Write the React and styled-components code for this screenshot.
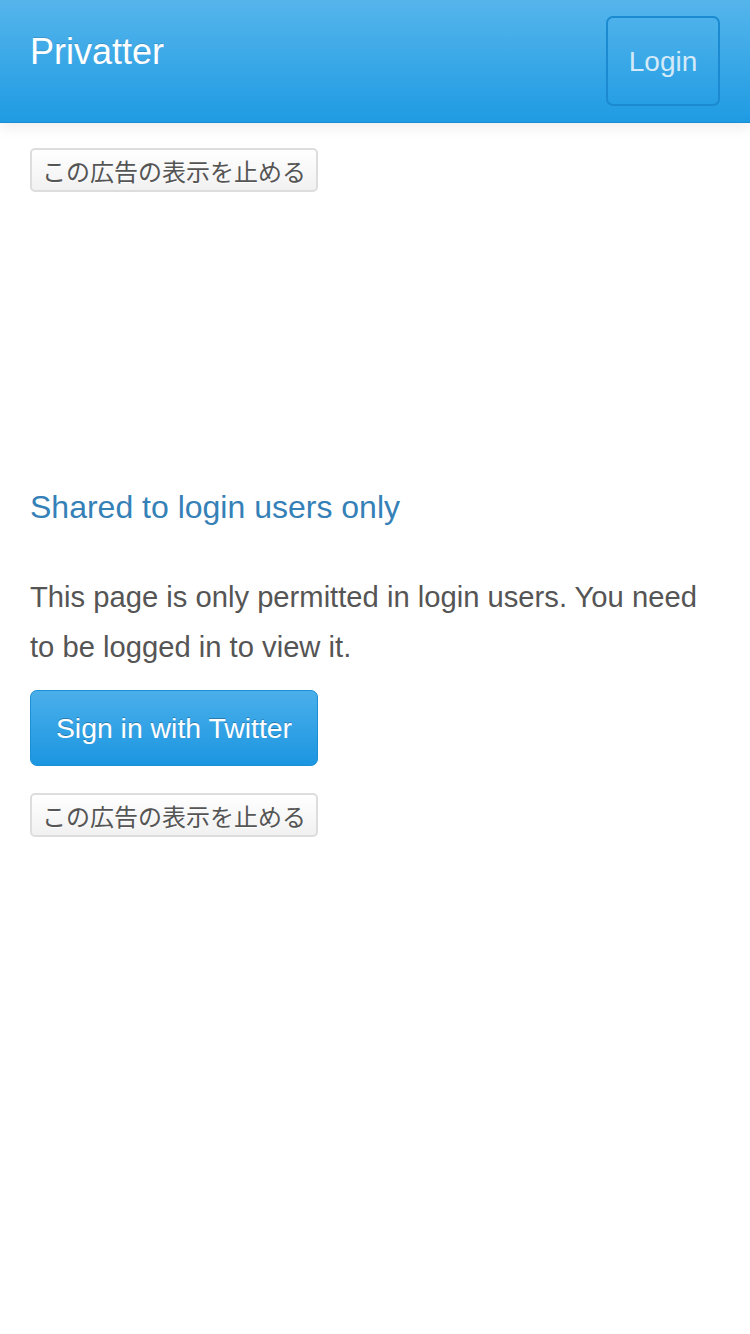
import React from "react"
import styled, { createGlobalStyle } from "styled-components"

const GlobalStyle = createGlobalStyle`
  html, body {
    margin: 0;
    padding: 0;
    background: #fff;
  }
  body {
    font-family: "Liberation Sans", Arial, "Noto Sans CJK JP", sans-serif;
    color: #555;
  }
`

const App = () => (
  <>
    <GlobalStyle />
    <Navbar>
      <Brand>Privatter</Brand>
      <LoginButton>Login</LoginButton>
    </Navbar>
    <Main>
      <AdBlock>
        <HideAdButton>この広告の表示を止める</HideAdButton>
        <AdSpace />
      </AdBlock>
      <Heading>Shared to login users only</Heading>
      <Message>
        This page is only permitted in login users. You need to be logged in
        to view it.
      </Message>
      <TwitterButton>Sign in with Twitter</TwitterButton>
      <AdBlock>
        <HideAdButton>この広告の表示を止める</HideAdButton>
      </AdBlock>
    </Main>
  </>
)

const Navbar = styled.header`
  display: flex;
  align-items: flex-start;
  justify-content: space-between;
  height: 122px;
  padding: 0 30px;
  background: linear-gradient(to bottom, #55b5eb 0%, #1f9be3 100%);
  border-bottom: 1px solid #1a8dd4;
  box-shadow: 0 4px 14px rgba(0, 0, 0, 0.08);
  position: relative;
`

const Brand = styled.div`
  font-size: 36px;
  line-height: 40px;
  color: #fff;
  margin-top: 32px;
  text-shadow: 0 -1px 0 rgba(0, 0, 0, 0.15);
`

const LoginButton = styled.button`
  margin-top: 16px;
  width: 114px;
  height: 90px;
  padding: 2px 0 0;
  box-sizing: border-box;
  background: transparent;
  border: 2px solid #1b8ad0;
  border-radius: 7px;
  font-family: inherit;
  font-size: 28px;
  color: #d4eaf8;
`

const Main = styled.main`
  padding: 25px 30px 0;
`

const AdBlock = styled.div`
  display: flex;
  flex-direction: column;
  align-items: flex-start;
`

const HideAdButton = styled.button`
  width: 288px;
  height: 44px;
  box-sizing: border-box;
  padding: 0;
  border: 2px solid #ddd;
  border-radius: 5px;
  background: linear-gradient(to bottom, #ffffff 0%, #f1f1f1 100%);
  font-family: "Liberation Sans", "Noto Sans CJK JP", sans-serif;
  font-size: 24px;
  font-weight: normal;
  color: #555;
  text-shadow: 0 1px 0 #fff;
`

const AdSpace = styled.div`
  height: 295px;
`

const Heading = styled.h2`
  margin: 0;
  font-size: 32px;
  line-height: 40px;
  font-weight: normal;
  color: #3581b7;
`

const Message = styled.p`
  margin: 45px 0 18px;
  font-size: 29.2px;
  line-height: 50px;
  color: #555;
`

const TwitterButton = styled.button`
  display: block;
  width: 288px;
  height: 76px;
  box-sizing: border-box;
  padding: 0;
  margin-bottom: 27px;
  border: 1px solid #1b8fd6;
  border-radius: 7px;
  background: linear-gradient(to bottom, #4aafea 0%, #1c96e1 100%);
  font-family: inherit;
  font-size: 28.4px;
  color: #fff;
  text-shadow: 0 -1px 0 rgba(0, 0, 0, 0.25);
`

export default App
